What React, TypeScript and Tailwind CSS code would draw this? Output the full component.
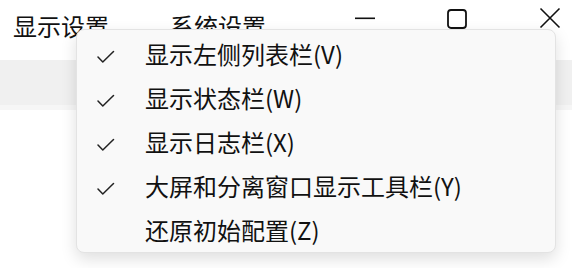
import React from "react";

const font = { fontFamily: '"Noto Sans CJK SC", "Noto Sans", sans-serif' };

function Check() {
  return (
    <svg width="18" height="14" viewBox="0 0 18 14" className="block">
      <path d="M1 7 L5.8 12 L16.5 1.5" fill="none" stroke="#222" strokeWidth="1.5" strokeLinecap="round" strokeLinejoin="round" />
    </svg>
  );
}

const items = [
  { label: "显示左侧列表栏(V)", checked: true },
  { label: "显示状态栏(W)", checked: true },
  { label: "显示日志栏(X)", checked: true },
  { label: "大屏和分离窗口显示工具栏(Y)", checked: true },
  { label: "还原初始配置(Z)", checked: false },
];

export default function App() {
  return (
    <div className="relative w-[572px] h-[268px] bg-white overflow-hidden text-[#111]" style={font}>
      <div className="flex h-[60px] items-start">
        <div className="ml-[13px] text-[24px] leading-[52px]">显示设置</div>
        <div className="ml-[61px] text-[24px] leading-[52px]">系统设置</div>
        <div className="ml-auto flex items-start">
          <svg width="20" height="40" viewBox="0 0 20 40" className="mr-[71px]">
            <rect x="0" y="17.5" width="20" height="1.6" fill="#111" />
          </svg>
          <svg width="22" height="40" viewBox="0 0 22 40" className="mr-[71px]">
            <rect x="2" y="10" width="18" height="18" rx="3" fill="none" stroke="#111" strokeWidth="1.8" />
          </svg>
          <svg width="22" height="40" viewBox="0 0 22 40" className="mr-[11px]">
            <path d="M1.5 8.5 L20.5 27.5 M20.5 8.5 L1.5 27.5" stroke="#111" strokeWidth="1.6" />
          </svg>
        </div>
      </div>
      <div className="h-[45px] bg-[#f0f0f0]" />
      <div className="h-[5px] bg-[#f6f6f6]" />

      <div className="absolute left-[76px] top-[29px] w-[480px] rounded-[8px] border border-[#e3e3e3] bg-[#f9f9f9] pt-[2px] shadow-[0_6px_16px_rgba(0,0,0,0.13)]">
        {items.map((it) => (
          <div key={it.label} className="flex h-[44px] items-center">
            <div className="w-[68px] flex justify-end pr-[30px] pt-[5px]">
              {it.checked ? <Check /> : null}
            </div>
            <div className="text-[24px] leading-[44px]">{it.label}</div>
          </div>
        ))}
      </div>
    </div>
  );
}
